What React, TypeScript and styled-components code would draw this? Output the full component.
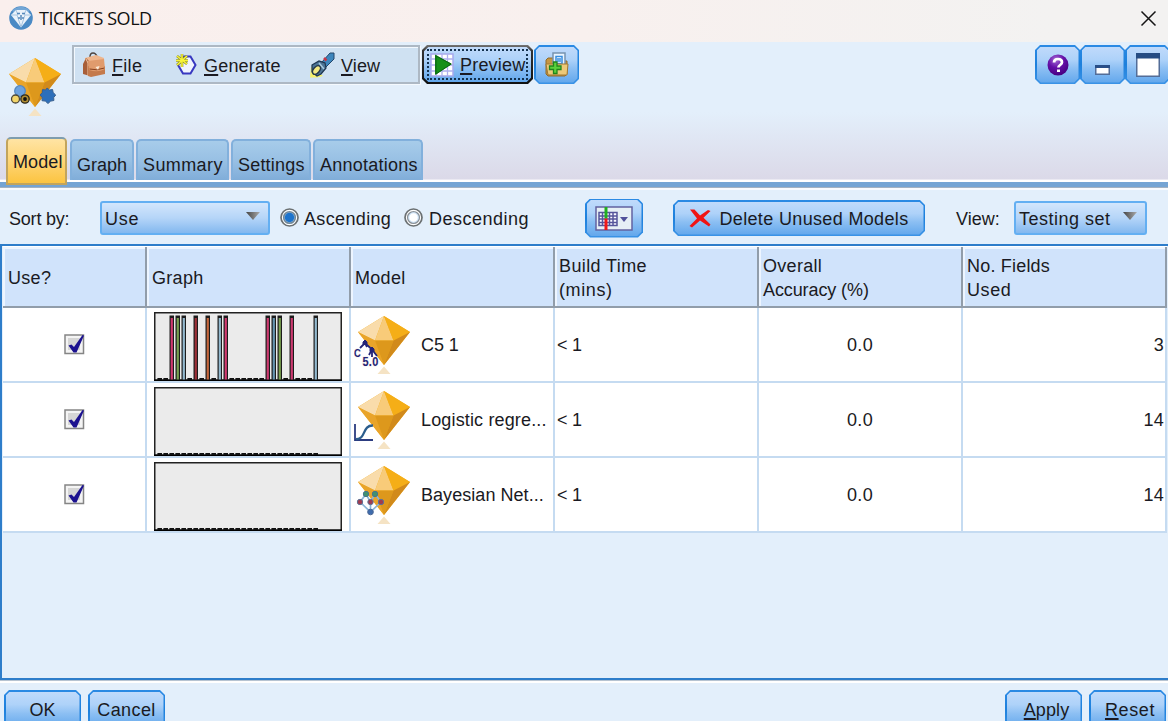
import React from 'react';
import styled, { createGlobalStyle, css } from 'styled-components';

const Global = createGlobalStyle`
  * { box-sizing: border-box; }
  html, body { margin: 0; padding: 0; }
  body { width: 1168px; height: 721px; overflow: hidden; background: #e4f0fc; }
`;

const Window = styled.div`
  display: flex;
  flex-direction: column;
  width: 1168px;
  height: 721px;
  overflow: hidden;
  background: #e3effb;
  color: #1a1a22;
  font-family: 'Liberation Sans', Arial, sans-serif;
  font-size: 18px;
  line-height: 24px;
  white-space: nowrap;
`;

const TitleBar = styled.header`
  display: flex;
  flex: none;
  align-items: center;
  height: 42px;
  padding: 0 11px 6px 9px;
  background: linear-gradient(90deg, #faefed 0%, #f8f0ee 50%, #f3f2f1 90%);
`;

const Title = styled.h1`
  flex: 1;
  margin: 0 0 0 6px;
  color: #111;
  font: 400 18px/24px 'Open Sans', 'Noto Sans', sans-serif;
  letter-spacing: -0.45px;
`;

const Header = styled.section`
  display: flex;
  flex-direction: column;
  flex: none;
  justify-content: space-between;
  height: 140px;
  padding: 3px 0 0 6px;
  background: linear-gradient(#e3effb 0%, #e3effb 50%, #dbd9e8 98%, #fff 98.5%);
`;

const HeaderTools = styled.div`
  display: flex;
  align-items: flex-start;
`;

const NuggetSlot = styled.div`
  width: 66px;
  height: 76px;
  margin-left: -1px;
  margin-right: 1px;
  padding: 12px 0 0 0;
`;

const MenuBar = styled.nav`
  display: flex;
  align-items: center;
  width: 348px;
  height: 39px;
  border: 2px solid #adb8c4;
  box-shadow: inset 1px 1px #f2f8fe, 1px 1px #f4f9fe;
  background: #cfe1f2;
`;

const MenuItem = styled.div<{ $w: number; $pad: number; $spacing?: number }>`
  display: flex;
  align-items: center;
  width: ${p => p.$w}px;
  padding-left: ${p => p.$pad}px;
  gap: 6px;
  letter-spacing: ${p => p.$spacing ?? 0.3}px;
  & > span { padding-top: 2px; }
`;

const Key = styled.span`
  text-decoration: underline;
  text-decoration-thickness: 1.5px;
  text-underline-offset: 2px;
  text-decoration-skip-ink: none;
`;

const cut = (n: number) => css`
  clip-path: polygon(${n}px 0, calc(100% - ${n}px) 0, 100% ${n}px, 100% calc(100% - ${n}px),
    calc(100% - ${n}px) 100%, ${n}px 100%, 0 calc(100% - ${n}px), 0 ${n}px);
`;

const Button = styled.button<{ $w: number; $h?: number; $spacing?: number; $focus?: boolean }>`
  position: relative;
  isolation: isolate;
  display: flex;
  flex: none;
  align-items: center;
  justify-content: center;
  width: ${p => p.$w}px;
  height: ${p => p.$h ?? 39}px;
  padding: 0;
  border: 0;
  color: inherit;
  font: inherit;
  letter-spacing: ${p => p.$spacing ?? 0.4}px;
  background: ${p => (p.$focus ? 'linear-gradient(#777 0, #333 15%, #111 100%)' : 'linear-gradient(#2b8ae4, #1d80dc 50%, #3b93e6)')};
  ${cut(5)}
  &::before {
    content: '';
    position: absolute;
    z-index: -1;
    inset: ${p => (p.$focus ? 2 : 1.5)}px;
    background: linear-gradient(#c0dafb 0%, #aed2f9 35%, #8cbff3 60%, #62a7ec 100%);
    ${cut(4.3)}
  }
`;

const Caption = styled.span<{ $left?: number }>`
  padding-top: 1px;
  padding-left: ${p => p.$left ?? 0}px;
`;

const FocusRing = styled.span`
  display: flex;
  align-items: center;
  width: 101px;
  height: 31px;
  padding-left: 4px;
  gap: 6px;
  border: 2px dotted #14324f;
  & > svg { margin-left: -3px; }
`;

const WindowButtons = styled.div`
  display: flex;
  margin-left: auto;
  width: 133px;
`;

const Tabs = styled.div`
  display: flex;
  align-items: flex-end;
  gap: 2px;
`;

const Tab = styled.div<{ $w: number; $active?: boolean; $spacing?: number }>`
  display: flex;
  flex: none;
  width: ${p => p.$w}px;
  height: 41px;
  margin-bottom: 2px;
  padding: 12px 0 0 5px;
  border: 2px solid #82b0dc;
  border-bottom: 0;
  border-radius: 5px 5px 0 0;
  background: linear-gradient(#a7ccea, #98c0e4 50%, #80add9);
  letter-spacing: ${p => p.$spacing ?? 0.3}px;
  ${p =>
    p.$active &&
    css`
      position: relative;
      z-index: 1;
      height: 48px;
      margin: 0 1px -3px 0;
      border: 2px solid #c2a45c;
      border-top-color: #7f9dae;
      background: linear-gradient(#ffe4a4, #fed576 50%, #fcc441);
      padding-top: 11px;
    `}
`;

const Strip = styled.div`
  flex: none;
  height: 8px;
  background: linear-gradient(#74a4d4 0 5px, #a3b1c1 5px 6.500px, #f8fbff 6.500px);
`;

const Toolbar = styled.div`
  display: flex;
  flex: none;
  align-items: center;
  height: 54px;
  padding: 2px 0 0 9px;
`;

const Label = styled.span<{ $w: number; $spacing?: number }>`
  width: ${p => p.$w}px;
  padding-top: 1px;
  letter-spacing: ${p => p.$spacing ?? 0.4}px;
`;

const Combo = styled.div<{ $w: number; $spacing?: number }>`
  display: flex;
  align-items: center;
  justify-content: space-between;
  width: ${p => p.$w}px;
  height: 34px;
  padding: 0 8px 0 3px;
  border: 2px solid #63aff2;
  border-radius: 3px;
  background: linear-gradient(#d3e6fc, #b5d5f8 50%, #83b8ef);
  letter-spacing: ${p => p.$spacing ?? 0.4}px;
  & > svg { margin-top: -3px; }
`;

const Radio = styled.div<{ $ml: number; $w: number; $spacing?: number }>`
  display: flex;
  align-items: center;
  gap: 5px;
  width: ${p => p.$w}px;
  margin-left: ${p => p.$ml}px;
  letter-spacing: ${p => p.$spacing ?? 0.35}px;
  & > svg { margin-top: -1px; }
`;

const Spacer = styled.div<{ $w: number }>`
  flex: none;
  width: ${p => p.$w}px;
`;

const Panel = styled.main`
  flex: none;
  height: 436px;
  padding-left: 1px;
  border: solid #2e7dca;
  border-width: 2px 0 2px 2px;
  background: #e3effb;
`;

const Table = styled.div`
  width: 1164px;
`;

const columns = css`
  display: grid;
  grid-template-columns: 144px 204px 204px 204px 204px 204px;
`;

const HeadRow = styled.div`
  ${columns}
  height: 62px;
  border-bottom: 2px solid #919daa;
  border-top: 1px solid #fff;
`;

const HeadCell = styled.div<{ $left?: number }>`
  display: flex;
  flex-direction: column;
  justify-content: center;
  padding: 3px 0 0 ${p => p.$left ?? 4}px;
  border-right: 2px solid #919daa;
  background: #d0e3fb;
  box-shadow: inset 2px 2px #edf5ff;
  letter-spacing: 0.3px;
`;

const HeadText = styled.span<{ $spacing: number }>`
  letter-spacing: ${p => p.$spacing}px;
`;

const BodyRow = styled.div`
  ${columns}
  height: 75px;
  background: #fff;
  border-bottom: 2px solid #c5dbf1;
`;

const Cell = styled.div<{ $align?: string; $pad?: string; $spacing?: number }>`
  display: flex;
  align-items: center;
  justify-content: ${p => p.$align ?? 'flex-start'};
  padding: ${p => p.$pad ?? '0'};
  border-right: 2px solid #c5dbf1;
  letter-spacing: ${p => p.$spacing ?? 0.3}px;
`;

const ModelName = styled.span<{ $spacing: number }>`
  margin: -2px 0 0 9px;
  letter-spacing: ${p => p.$spacing}px;
`;

const Footer = styled.footer`
  display: flex;
  flex: none;
  height: 41px;
  padding: 10px 2px 0 4px;
  gap: 7px;
  background: linear-gradient(#b6c3d1 0 1px, #fff 1px 3px, #e3effb 3px);
  overflow: hidden;
`;

const Push = styled.div`
  flex: 1;
`;

const Diamond = () => (
  <>
    <path d="M30 1 4 17 30 50 56 17Z" fill="#f4ae1b" />
    <path d="M30 1 4 17 21 25.500Z" fill="#f9dcab" />
    <path d="M30 1 21 25.500H39.500Z" fill="#f8cb79" />
    <path d="M30 1 39.500 25.500 56 17Z" fill="#f5ae17" />
    <path d="M4 17 21 25.500 30 50Z" fill="#e9a42a" />
    <path d="M21 25.500H39.500L30 50Z" fill="#dd981c" />
    <path d="M39.500 25.500 56 17 30 50Z" fill="#d18a1b" />
    <path d="M30 51.500 36.500 59H23.500Z" fill="#f5e3c4" />
  </>
);

const Nugget = ({ kind }: { kind: string }) => (
  <svg width="58" height="62" viewBox="0 0 58 62">
    <Diamond />
    {kind === 'c5' && (
      <g fill="none" stroke="#242477" strokeWidth="1.800">
        <path d="M6 33 11 28 18 34.500 15 40M18 34.500 23 41M11 28 13 32M18 34V42" />
        <path d="M9 29.500V27l2-2 2 2v2.500ZM16 36.500V34l2-2 2 2v2.500Z" fill="#242477" strokeWidth="1" />
        <g fill="#242477" stroke="#f3ece8" strokeWidth="1.200" paintOrder="stroke" fontFamily="Liberation Sans, sans-serif" fontWeight="700">
          <text x="0" y="42" fontSize="11" textLength="7" lengthAdjust="spacingAndGlyphs">C</text>
          <text x="8.500" y="51" fontSize="13" textLength="16" lengthAdjust="spacingAndGlyphs">5.0</text>
        </g>
      </g>
    )}
    {kind === 'logistic' && (
      <g fill="none" strokeWidth="1.800">
        <path d="M1 34V50H19" stroke="#2c3c80" />
        <path d="M2 49C12 50 8 35 19 35.500" stroke="#2b5d8c" strokeWidth="2.300" />
      </g>
    )}
    {kind === 'bayes' && (
      <g>
        <path d="M6 37 12 29 16.500 37 21 29 27 37 16.500 47ZM16.500 37V47" fill="none" stroke="#8ab4d6" strokeWidth="1.700" />
        <g strokeWidth="1">
          <circle cx="12" cy="29" r="2.700" fill="#3f9271" stroke="#47758a" />
          <circle cx="21" cy="29" r="2.700" fill="#3f9271" stroke="#47758a" />
          <circle cx="6" cy="37" r="2.700" fill="#9f3c50" stroke="#5f7295" />
          <circle cx="16.500" cy="37" r="2.700" fill="#9f3c50" stroke="#5f7295" />
          <circle cx="27" cy="37" r="2.700" fill="#9f3c50" stroke="#5f7295" />
          <circle cx="16.500" cy="47" r="2.800" fill="#3e6cae" stroke="#4b6795" />
        </g>
      </g>
    )}
    {kind === 'auto' && (
      <g strokeWidth="1.300" transform="translate(3 0)">
        <circle cx="12" cy="34" r="5.300" fill="#6da2df" stroke="#5388c2" />
        <circle cx="7.500" cy="42" r="4" fill="#f2d56a" stroke="#4c473a" />
        <circle cx="17" cy="42" r="4.200" fill="#b08d32" stroke="#2b271b" />
        <circle cx="17" cy="42" r="1.900" fill="#111" />
        <path d="m39 31 2.600 2 3-.5.500 3 2.600 2.500-2 2.500.2 3-3.200.6-2.700 2.400-2.700-2.400-3.300-.4.200-3.200L32 38l2.300-2.400.2-3 3.200.4Z" fill="#2d6fba" stroke="#3b618e" strokeWidth="1" />
      </g>
    )}
  </svg>
);

const AppIcon = () => (
  <svg width="24" height="24" viewBox="0 0 24 24">
    <circle cx="12" cy="12" r="11.800" fill="#4a8ac5" />
    <path d="M3 4.500Q12-3 21 4.500L18 8H6Z" fill="#72a6d6" />
    <path d="M2 9 7 4h10L22 9 12 21.500Z" fill="#eaf2fa" />
    <path d="M2 9h6l4 12M22 9h-6l-4 12M7 4l2 5M17 4l-2 5" fill="none" stroke="#a6c4e0" strokeWidth="1" />
    <path d="M8 7.500h3M13 7.500h3M12 9v5M10 11v2M14 11v2" stroke="#5689bb" strokeWidth="1.500" />
  </svg>
);

const BagIcon = () => (
  <svg width="24" height="26" viewBox="0 0 24 26">
    <path d="M8 5q0-4 3-4t4 4" fill="none" stroke="#4d4440" strokeWidth="1.500" />
    <path d="M3 6 14 3l8 3v9H3Z" fill="#eeb68e" />
    <path d="M1 12 4 6l4 4v14l-7-2Z" fill="#a85f39" />
    <path d="m4 7 2 4v13" fill="none" stroke="#f4cba8" />
    <path d="M6 14h17v8l-14 3-3-1Z" fill="#c47a4c" />
    <path d="m6 9 16-2 1 10q-7 4-16 1Z" fill="#e09b6d" />
    <path d="M7.500 17q7 2 15-1" fill="none" stroke="#87411f" />
    <path d="m13.500 15 4-1-1.500 4Z" fill="#fbe9d6" />
  </svg>
);

const GenerateIcon = () => (
  <svg width="22" height="24" viewBox="0 0 22 24">
    <path d="M8 3.500h6.500l5 8.500-5 8.500H7L2 12Z" fill="#f0f4ff" stroke="#3838c0" strokeWidth="2" />
    <path d="M6 1v13M1 3l10 8M11 3 1 12M0 7.500h12" stroke="#8b8b25" strokeWidth="2.600" />
    <path d="M6 1v13M1 3l10 8M11 3 1 12M0 7.500h12" stroke="#f8f53a" strokeWidth="1.500" />
  </svg>
);

const TorchIcon = () => (
  <svg width="25" height="26" viewBox="0 0 25 26">
    <path d="m1 15 12 9-6 1.500H0Z" fill="#f6f16a" />
    <path d="m12 10 8-9h4v6l-9 9Z" fill="#3d86bd" stroke="#24476b" />
    <path d="m2 13 7-4 6 2 1 5-5 6-4 2-5-4Z" fill="#4c7394" stroke="#1d3550" strokeWidth="1.200" />
    <ellipse cx="6.500" cy="18" rx="3" ry="5" transform="rotate(40 6.500 18)" fill="#f3e981" stroke="#263849" strokeWidth="1.500" />
    <path d="m9 11 5 6" stroke="#a8c9df" strokeWidth="1.500" />
    <path d="m14 6 2.500 2.500" stroke="#c73546" strokeWidth="2.500" />
  </svg>
);

const PreviewIcon = () => (
  <svg width="24" height="24" viewBox="0 0 24 24">
    <path d="M1 1h22v22H1Z" fill="#fff" stroke="#a7a9ec" strokeWidth="1.500" />
    <path d="M1 6h22M1 12h22M1 18h22M6.500 1v22M12 1v22M17.500 1v22" stroke="#aeb0ee" strokeWidth="1.300" />
    <path d="M5 1.500 22 11 5 22Z" fill="#148218" />
    <path d="M6 3v18l15-10Z" fill="#159017" stroke="#0b6713" />
  </svg>
);

const FolderIcon = () => (
  <svg width="24" height="25" viewBox="0 0 24 25">
    <path d="M1 10V8l2-2h5l2 3h12v13l-2 2H3l-2-2Z" fill="#c69742" stroke="#8f6b2c" />
    <path d="M8 1h12v13H8Z" fill="#e9f4ff" stroke="#7693b0" strokeWidth="1.500" />
    <path d="M11 4.500h6v7h-6ZM12 7h4M12 9h4" fill="#fff" stroke="#368de0" strokeWidth="1.500" />
    <path d="M1 12h22l-1 11H3Z" fill="#edc978" stroke="#a17832" />
    <path d="M8.500 10h3.500v4h4v3.500h-4v4H8.500v-4h-4V14h4Z" fill="#5bd13b" stroke="#22861d" strokeWidth="1.300" />
  </svg>
);

const HelpIcon = () => (
  <svg width="22" height="22" viewBox="0 0 22 22">
    <defs>
      <radialGradient id="help" cx=".4" cy=".25" r=".75">
        <stop offset="0" stopColor="#a66cd6" />
        <stop offset=".5" stopColor="#6510a8" />
        <stop offset="1" stopColor="#470082" />
      </radialGradient>
    </defs>
    <circle cx="11" cy="11" r="10.500" fill="url(#help)" />
    <path d="M7 8.500Q7 5 11 5t4 3.300c0 2.700-3.600 2.700-3.600 5.200" fill="none" stroke="#fff" strokeWidth="2.700" />
    <path d="M10 15.500h3V18h-3Z" fill="#fff" />
  </svg>
);

const MinimizeIcon = () => (
  <svg width="15" height="26" viewBox="0 0 15 26">
    <path d="M.75 14h13.500v8.250H.75Z" fill="#fff" stroke="#536d98" strokeWidth="1.500" />
    <path d="M0 13h15v3H0Z" fill="#294f88" />
  </svg>
);

const MaximizeIcon = () => (
  <svg width="24" height="24" viewBox="0 0 24 24">
    <path d="M.75.75h22.500v22.500H.75Z" fill="#fff" stroke="#536d98" strokeWidth="1.500" />
    <path d="M0 0h24v5.500H0Z" fill="#264c83" />
  </svg>
);

const CloseIcon = () => (
  <svg width="17" height="17" viewBox="0 0 17 17">
    <path d="m1.500 1.500 14 14M15.500 1.500l-14 14" stroke="#151515" strokeWidth="1.500" />
  </svg>
);

const Arrow = () => (
  <svg width="14" height="9" viewBox="0 0 14 9">
    <defs>
      <linearGradient id="arrow">
        <stop offset="0" stopColor="#444" />
        <stop offset="1" stopColor="#aaa" />
      </linearGradient>
    </defs>
    <path d="M0 0h14L7 8Z" fill="url(#arrow)" />
  </svg>
);

const RadioDot = ({ on }: { on?: boolean }) => (
  <svg width="19" height="19" viewBox="0 0 19 19">
    <circle cx="9.500" cy="9.500" r="8.500" fill="#fff" stroke="#6b7072" strokeWidth="1.700" />
    <circle cx="9.500" cy="9.500" r="5.800" fill={on ? '#9fc4e8' : '#fff'} stroke={on ? '#6f8799' : '#8c9297'} strokeWidth="1.600" />
    {on && <circle cx="9.500" cy="9.500" r="4.700" fill="#1e74cc" />}
    {!on && <circle cx="9.500" cy="9.500" r="4.800" fill="none" stroke="#c3def8" strokeWidth="1" />}
  </svg>
);

const GridIcon = () => (
  <svg width="38" height="25" viewBox="0 0 38 25">
    <path d="M1 1h36v23H1Z" fill="#e6eff5" stroke="#6262a0" strokeWidth="1.500" />
    <path d="M4 6.500h18v13H4Z" fill="#f8f8ff" stroke="#55559b" strokeWidth="1.500" />
    <path d="M4 10h18M4 13h18M4 16.500h18M7.500 6v14M14.500 6v14M18 6v14" stroke="#55559b" strokeWidth="1.500" />
    <path d="M11 1v11.500" stroke="#20b020" strokeWidth="3" />
    <path d="M11 12.500V24" stroke="#f01818" strokeWidth="3" />
    <path d="M25 11h8l-4 5Z" fill="#51519a" />
  </svg>
);

const DeleteIcon = () => (
  <svg width="22" height="19" viewBox="0 0 22 19">
    <path d="M1 .5h4.500L11 6.500 19 1l2.500 1-7 6.800 7 6.700-1.500 2L11 11.500 3 18.500.5 17 8 9.500Z" fill="#f01414" />
  </svg>
);

const CheckBox = () => (
  <svg width="21" height="21" viewBox="0 0 21 21">
    <path d="M1 1h18.500v18.500H1Z" fill="#f4f4f4" stroke="#858585" strokeWidth="1.500" />
    <path d="M4 4h12v12H4Z" fill="#d6d6d6" />
    <path d="m4.500 11.500 3-1 2.500 2.500L18.500 1l1.500.5L12.500 18.500h-3Z" fill="#1c1290" />
  </svg>
);

const BARS: Record<number, string> = {
  2: '#d0396f', 3: '#78a050', 4: '#93b9cf', 6: '#9c3038', 8: '#c4663c', 10: '#93b9cf', 11: '#d0396f',
  18: '#cc3a70', 19: '#6595b0', 20: '#78a050', 22: '#cc3a70', 26: '#93b9cf',
};

const Chart = ({ bars = {} }: { bars?: Record<number, string> }) => (
  <svg width="188" height="69" viewBox="0 0 188 69">
    <path d="M.75.75h186.500v67.500H.75Z" fill="#ebebeb" stroke="#222" strokeWidth="1.500" />
    <path d="M0 68.250h188" stroke="#000" strokeWidth="1.500" />
    {Array.from({ length: 27 }, (_, i) =>
      bars[i] ? (
        <g key={i}>
          <path d={`M${i * 6 + 3.5} 3.500h4.500V68h-4.500Z`} fill="#1c1c1c" />
          <path d={`M${i * 6 + 4.7} 6h2.200V67.500h-2.200Z`} fill={bars[i]} />
        </g>
      ) : (
        <path key={i} d={`M${i * 6 + 3.4} 66h4.600V68h-4.600Z`} fill="#111" />
      ),
    )}
  </svg>
);

const ROWS = [
  { kind: 'c5', name: 'C5 1', fields: '3', bars: BARS, spacing: -0.05 },
  { kind: 'logistic', name: 'Logistic regre...', fields: '14', spacing: 0.15 },
  { kind: 'bayes', name: 'Bayesian Net...', fields: '14', spacing: 0.05 },
];

export default function App() {
  return (
    <Window>
      <Global />
      <TitleBar>
        <AppIcon />
        <Title>TICKETS SOLD</Title>
        <CloseIcon />
      </TitleBar>
      <Header>
        <HeaderTools>
          <NuggetSlot><Nugget kind="auto" /></NuggetSlot>
          <MenuBar>
            <MenuItem $w={94} $pad={8}><BagIcon /><span><Key>F</Key>ile</span></MenuItem>
            <MenuItem $w={136} $pad={8} $spacing={0.2}><GenerateIcon /><span><Key>G</Key>enerate</span></MenuItem>
            <MenuItem $w={100} $pad={6} $spacing={0.1}><TorchIcon /><span><Key>V</Key>iew</span></MenuItem>
          </MenuBar>
          <Spacer $w={2} />
          <Button $w={111} $focus $spacing={0.2}>
            <FocusRing><PreviewIcon /><Caption><Key>P</Key>review</Caption></FocusRing>
          </Button>
          <Spacer $w={1} />
          <Button $w={45}><FolderIcon /></Button>
          <WindowButtons>
            <Button $w={45}><HelpIcon /></Button>
            <Button $w={45}><MinimizeIcon /></Button>
            <Button $w={45}><MaximizeIcon /></Button>
          </WindowButtons>
        </HeaderTools>
        <Tabs>
          <Tab $w={61} $active $spacing={0.1}>Model</Tab>
          <Tab $w={64} $spacing={0}>Graph</Tab>
          <Tab $w={93} $spacing={0.4}>Summary</Tab>
          <Tab $w={80} $spacing={0.2}>Settings</Tab>
          <Tab $w={110} $spacing={0.25}>Annotations</Tab>
        </Tabs>
      </Header>
      <Strip />
      <Toolbar>
        <Label $w={91} $spacing={-0.2}>Sort by:</Label>
        <Combo $w={170} $spacing={0.7}><Caption>Use</Caption><Arrow /></Combo>
        <Radio $ml={10} $w={115}><RadioDot on /><Caption>Ascending</Caption></Radio>
        <Radio $ml={9} $w={127} $spacing={0.5}><RadioDot /><Caption $left={1}>Descending</Caption></Radio>
        <Spacer $w={54} />
        <Button $w={58}><GridIcon /></Button>
        <Spacer $w={30} />
        <Button $w={252} $h={36} $spacing={0.35}><DeleteIcon /><Spacer $w={8} /><Caption>Delete Unused Models</Caption></Button>
        <Spacer $w={31} />
        <Label $w={58} $spacing={0}>View:</Label>
        <Combo $w={133} $spacing={0.5}><Caption>Testing set</Caption><Arrow /></Combo>
      </Toolbar>
      <Panel>
        <Table>
          <HeadRow>
            <HeadCell $left={5}>Use?</HeadCell>
            <HeadCell $left={5}>Graph</HeadCell>
            <HeadCell $left={4}>Model</HeadCell>
            <HeadCell><HeadText $spacing={0.4}>Build Time</HeadText><HeadText $spacing={0.6}>(mins)</HeadText></HeadCell>
            <HeadCell><HeadText $spacing={0.3}>Overall</HeadText><HeadText $spacing={-0.1}>Accuracy (%)</HeadText></HeadCell>
            <HeadCell><HeadText $spacing={0.2}>No. Fields</HeadText><HeadText $spacing={0.6}>Used</HeadText></HeadCell>
          </HeadRow>
          {ROWS.map(row => (
            <BodyRow key={row.kind}>
              <Cell $align="center"><CheckBox /></Cell>
              <Cell $pad="4px 0 0 7px"><Chart bars={row.bars} /></Cell>
              <Cell $pad="3px 0 0 3px"><Nugget kind={row.kind} /><ModelName $spacing={row.spacing}>{row.name}</ModelName></Cell>
              <Cell $pad="0 0 0 2px" $spacing={-0.3}>&lt; 1</Cell>
              <Cell $align="center">0.0</Cell>
              <Cell $align="flex-end" $pad="0 1px 0 0">{row.fields}</Cell>
            </BodyRow>
          ))}
        </Table>
      </Panel>
      <Footer>
        <Button $w={77} $spacing={0}><Caption>OK</Caption></Button>
        <Button $w={77}><Caption>Cancel</Caption></Button>
        <Push />
        <Button $w={77} $spacing={0.1}><Caption $left={6}><Key>A</Key>pply</Caption></Button>
        <Button $w={77} $spacing={0.6}><Caption $left={5}><Key>R</Key>eset</Caption></Button>
      </Footer>
    </Window>
  );
}
